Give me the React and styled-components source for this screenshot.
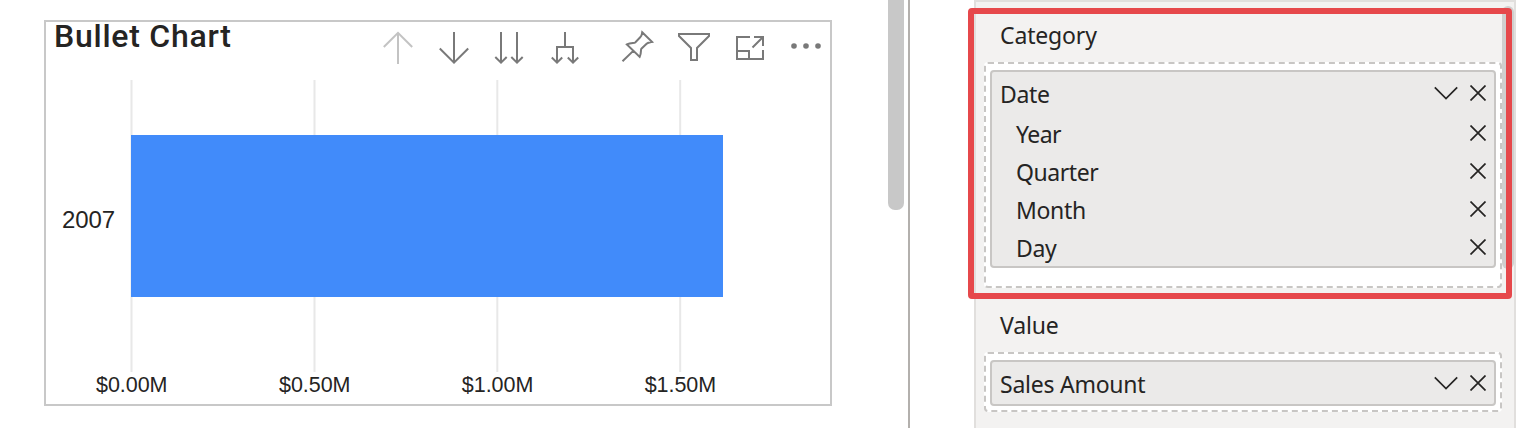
import React from 'react';
import styled, { createGlobalStyle } from 'styled-components';

const GlobalStyle = createGlobalStyle`
  * { box-sizing: border-box; }
  body { margin: 0; background: #fff; overflow: hidden; }
`;

const Page = styled.main`
  display: flex;
  width: 1516px;
  height: 428px;
  overflow: hidden;
  color: #252423;
`;

const Canvas = styled.section`
  flex: none;
  display: flex;
  justify-content: space-between;
  width: 910px;
  padding: 0 4px 0 44px;
  border-right: 2px solid #b3b0ad;
`;

const VisualCard = styled.article`
  width: 788px;
  height: 386px;
  margin-top: 20px;
  border: 2px solid #c8c8c8;
`;

const VisualHeader = styled.header`
  display: flex;
  justify-content: space-between;
  height: 58px;
  padding-left: 8px;
`;

const VisualTitle = styled.h1`
  margin: -5px 0 0;
  font: 500 32px/38px Roboto, sans-serif;
  letter-spacing: 0.75px;
  white-space: nowrap;
`;

const Toolbar = styled.div`
  display: flex;
  gap: 16px;
  padding: 5px 4px 0 0;
`;

const ToolIcon = styled.svg`
  display: block;
  width: 40px;
  height: 40px;
  margin-left: ${(p) => (p.$spaced ? '16px' : '0')};
  fill: none;
  stroke: ${(p) => (p.$disabled ? '#c3c3c3' : '#797979')};
  stroke-width: 2;
`;

const Chart = styled.svg`
  display: block;
  width: 784px;
  height: 324px;
  font-family: 'Liberation Sans', Arial, sans-serif;
  fill: #252423;
`;

const CanvasThumb = styled.div`
  width: 16px;
  height: 210px;
  border-radius: 0 0 7px 7px;
  background: #c8c8c8;
`;

const Pane = styled.aside`
  position: relative;
  width: 542px;
  height: 430px;
  margin-left: 64px;
  padding: 0 12px 0 8px;
  background: #f3f2f1;
  border: 2px solid #e1dfdd;
  font-family: 'Noto Sans', 'Open Sans', sans-serif;
`;

const PaneThumb = styled.div`
  position: absolute;
  top: 4px;
  right: 0;
  width: 12px;
  height: 263px;
  border-radius: 6px;
  background: #d0cfce;
`;

const Highlight = styled.div`
  position: absolute;
  z-index: 2;
  top: 5.7px;
  left: -8.3px;
  width: 544.4px;
  height: 291.2px;
  border: 6px solid #e6484b;
  border-radius: 4px;
`;

const Well = styled.section`
  height: ${(p) => p.$height}px;
`;

const WellTitle = styled.h2`
  height: 60px;
  margin: 0;
  padding: 14px 0 0 16px;
  font-size: 23px;
  font-weight: 400;
  line-height: 38px;
  letter-spacing: -0.15px;
`;

const DropZone = styled.div`
  position: relative;
  z-index: 1;
  width: 518px;
  height: ${(p) => p.$height}px;
  padding: 6px 4px;
  border: 2px dashed #c8c6c4;
  border-radius: 4px;
  background: #fff;
`;

const FieldBox = styled.div`
  height: ${(p) => p.$height}px;
  border: 2px solid #c8c6c4;
  border-radius: 4px;
  background: #ebeae9;
`;

const FieldRow = styled.div`
  display: flex;
  align-items: center;
  height: ${(p) => (p.$child ? 38 : 42)}px;
  padding: 0 8px 0 ${(p) => (p.$child ? 24 : 8)}px;
`;

const FieldName = styled.span`
  flex: 1;
  padding-top: 2px;
  font-size: 23px;
  line-height: 38px;
  letter-spacing: ${(p) => p.$tracking}px;
`;

const FieldIcon = styled.svg`
  width: ${(p) => p.$width}px;
  height: 16px;
  margin-left: 12px;
  fill: none;
  stroke: #252423;
  stroke-width: 1.7;
`;

const tools = [
  { id: 'up', disabled: true, d: 'M20 37V6M5.8 20 20 5.8 34.2 20' },
  { id: 'down', d: 'M20 5V36M5.8 21.5 20 35.7 34.2 21.5' },
  { id: 'next', d: 'M11 5V36M27 5V36M5.3 30 11 35.7 16.7 30M21.3 30 27 35.7 32.7 30' },
  { id: 'expand', d: 'M19 5V20M11 36V20H27V36M5.8 30.5 11 35.7 16.2 30.5M21.8 30.5 27 35.7 32.2 30.5' },
  { id: 'pin', spaced: true, d: 'M4.5 34.3 15.5 23.6M24.2 5.2 34 14.9C31.2 15.4 30 15.5 28.6 16.8L23.4 21.7C22.4 22.8 23.7 25.9 21.7 29.9L8.9 17.4C13 15.2 16 16.4 17.2 15.4L22.2 10.2C24 8.5 23.8 7.5 24.2 5.2Z' },
  { id: 'filter', d: 'M5 7H35V9L23 21V33H17V21L5 9Z' },
  { id: 'focus', d: 'M20 10H7V32H33V23M7 24H19V32M24 10H33V19M32.5 10.5 22.5 20.5' },
];

const ticks = [
  { x: 85.5, label: '$0.00M' },
  { x: 268.5, label: '$0.50M' },
  { x: 451.3, label: '$1.00M' },
  { x: 634.2, label: '$1.50M' },
];

function Tools() {
  return (
    <Toolbar>
      {tools.map((t) => (
        <ToolIcon key={t.id} viewBox="0 0 40 40" $disabled={t.disabled} $spaced={t.spaced}>
          <path d={t.d} />
        </ToolIcon>
      ))}
      <ToolIcon viewBox="0 0 40 40">
        <g fill="#797979" stroke="none">
          <circle cx="8" cy="19" r="2.8" />
          <circle cx="20" cy="19" r="2.8" />
          <circle cx="32" cy="19" r="2.8" />
        </g>
      </ToolIcon>
    </Toolbar>
  );
}

function BulletChart() {
  return (
    <Chart viewBox="0 0 784 324">
      {ticks.map((t) => (
        <line key={t.label} x1={t.x} x2={t.x} y1="0" y2="292" stroke="#e8e8e8" strokeWidth="2" />
      ))}
      <rect x="85" y="55" width="592" height="162" fill="#418bfa" />
      <text x="16" y="148" fontSize="24" textLength="53">2007</text>
      {ticks.map((t) => (
        <text key={t.label} x={t.x - 35.5} y="312" fontSize="21.5" textLength="71.5">{t.label}</text>
      ))}
    </Chart>
  );
}

function Field({ name, child, tracking = -0.35 }) {
  return (
    <FieldRow $child={child}>
      <FieldName $tracking={tracking}>{name}</FieldName>
      {!child && (
        <FieldIcon $width={24} viewBox="0 0 24 16"><path d="M.8 2.4 12 13.5 23.2 2.4" /></FieldIcon>
      )}
      <FieldIcon $width={16} viewBox="0 0 16 16"><path d="M.5.5 15.5 15.5M15.5.5.5 15.5" /></FieldIcon>
    </FieldRow>
  );
}

export default function App() {
  return (
    <>
      <GlobalStyle />
      <Page>
        <Canvas>
          <VisualCard>
            <VisualHeader>
              <VisualTitle>Bullet Chart</VisualTitle>
              <Tools />
            </VisualHeader>
            <BulletChart />
          </VisualCard>
          <CanvasThumb />
        </Canvas>
        <Pane>
          <PaneThumb />
          <Well $height={290}>
            <WellTitle>Category</WellTitle>
            <DropZone $height={226}>
              <FieldBox $height={198}>
                <Field name="Date" />
                <Field name="Year" child tracking={-0.6} />
                <Field name="Quarter" child tracking={-0.45} />
                <Field name="Month" child />
                <Field name="Day" child />
              </FieldBox>
            </DropZone>
          </Well>
          <Well $height={140}>
            <WellTitle>Value</WellTitle>
            <DropZone $height={60}>
              <FieldBox $height={46}>
                <Field name="Sales Amount" tracking={-0.25} />
              </FieldBox>
            </DropZone>
          </Well>
          <Highlight />
        </Pane>
      </Page>
    </>
  );
}
